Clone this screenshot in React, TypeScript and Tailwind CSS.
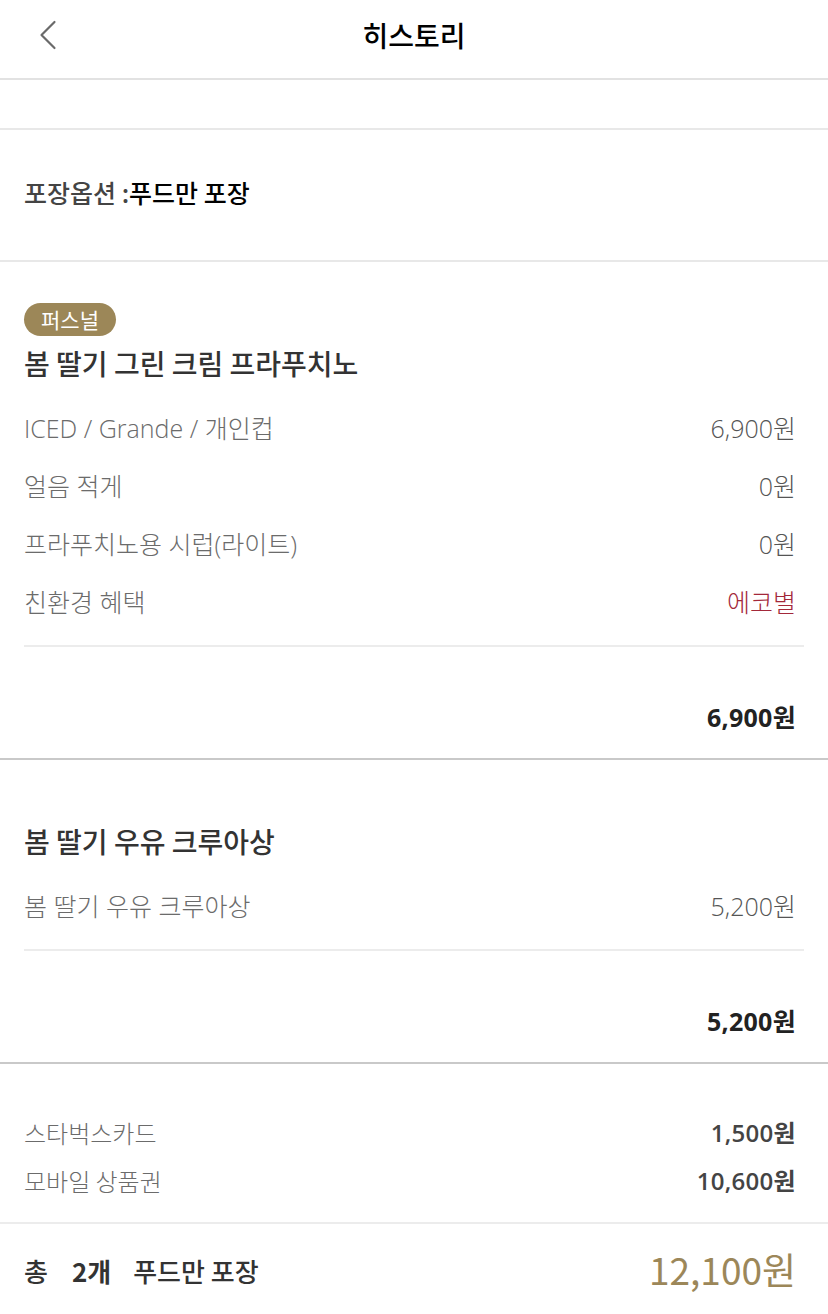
import { ChevronLeft } from "lucide-react"

const font = { fontFamily: '"Noto Sans CJK KR", "Noto Sans", sans-serif' }
const latin = { fontFamily: '"Open Sans", "Noto Sans CJK KR", sans-serif' }

type Option = { label: string; value: string; red?: boolean }

const OptionRow = ({ label, value, red }: Option) => (
    <div className="flex h-[58px] items-center justify-between pr-2 text-[25px] font-light">
        <span style={latin} className="text-[#6b6b6b]">
            {label}
        </span>
        <span style={latin} className={red ? "text-[#a3283a]" : "text-[#555]"}>
            {value}
        </span>
    </div>
)

const ProductBlock = ({
    badge,
    title,
    options,
    total,
    top,
}: {
    badge?: string
    title: string
    options: Option[]
    total: string
    top: string
}) => (
    <section className={`border-b-2 border-[#c9c9c9] px-6 ${top}`}>
        {badge && (
            <span className="inline-flex h-[33px] items-center rounded-full bg-[#9c8758] px-[17px] text-[21px] text-white">
                {badge}
            </span>
        )}
        <h2 className={`text-[28px] font-medium leading-10 text-[#333] ${badge ? "mt-[7px]" : ""}`}>{title}</h2>
        <div className="mt-[17px] border-b-2 border-[#ececec] pb-[13px]">
            {options.map((o) => (
                <OptionRow key={o.label} {...o} />
            ))}
        </div>
        <div
            style={latin}
            className="flex justify-end pt-[54px] pb-[25px] pr-2 text-[25px] font-bold leading-8 tracking-[0.3px] text-[#222]"
        >
            {total}
        </div>
    </section>
)

export default function App() {
    return (
        <div style={font} className="min-h-[1314px] w-[828px] bg-white">
            <header className="relative flex h-[80px] items-center justify-center border-b-2 border-[#e2e2e2]">
                <ChevronLeft
                    className="absolute top-[9px] left-[22px] h-[52px] w-[52px] text-[#6a6a6a]"
                    strokeWidth={1}
                />
                <h1 className="-mt-[8px] text-[28px] font-medium text-black">히스토리</h1>
            </header>

            <div className="h-[50px] border-b-2 border-[#e8e8e8]" />

            <div className="flex h-[132px] items-center border-b-2 border-[#e8e8e8] px-6 pb-[4px] text-[25px] font-medium">
                <span className="text-[#444]">포장옵션 :</span>
                <span className="text-black">푸드만 포장</span>
            </div>

            <ProductBlock
                top="pt-[41px]"
                badge="퍼스널"
                title="봄 딸기 그린 크림 프라푸치노"
                options={[
                    { label: "ICED / Grande / 개인컵", value: "6,900원" },
                    { label: "얼음 적게", value: "0원" },
                    { label: "프라푸치노용 시럽(라이트)", value: "0원" },
                    { label: "친환경 혜택", value: "에코별", red: true },
                ]}
                total="6,900원"
            />

            <ProductBlock
                top="pt-[61px]"
                title="봄 딸기 우유 크루아상"
                options={[{ label: "봄 딸기 우유 크루아상", value: "5,200원" }]}
                total="5,200원"
            />

            <section className="border-b-2 border-[#ececec] px-6 pt-[45px] pb-[17px] text-[24px]">
                <div className="flex h-12 items-center justify-between pr-2">
                    <span className="font-light text-[#6b6b6b]">스타벅스카드</span>
                    <span style={latin} className="font-semibold tracking-[0.3px] text-[#444]">
                        1,500원
                    </span>
                </div>
                <div className="flex h-12 items-center justify-between pr-2">
                    <span className="font-light text-[#6b6b6b]">모바일 상품권</span>
                    <span style={latin} className="font-semibold tracking-[0.3px] text-[#444]">
                        10,600원
                    </span>
                </div>
            </section>

            <footer className="flex h-[92px] items-center justify-between px-6 pr-8">
                <div className="flex items-center text-[26px] text-[#333]">
                    <span className="font-medium">총</span>
                    <span className="ml-6 font-bold">2개</span>
                    <span className="ml-[22px] font-medium">푸드만 포장</span>
                </div>
                <span className="text-[37px] text-[#9c8759]">12,100원</span>
            </footer>
        </div>
    )
}
